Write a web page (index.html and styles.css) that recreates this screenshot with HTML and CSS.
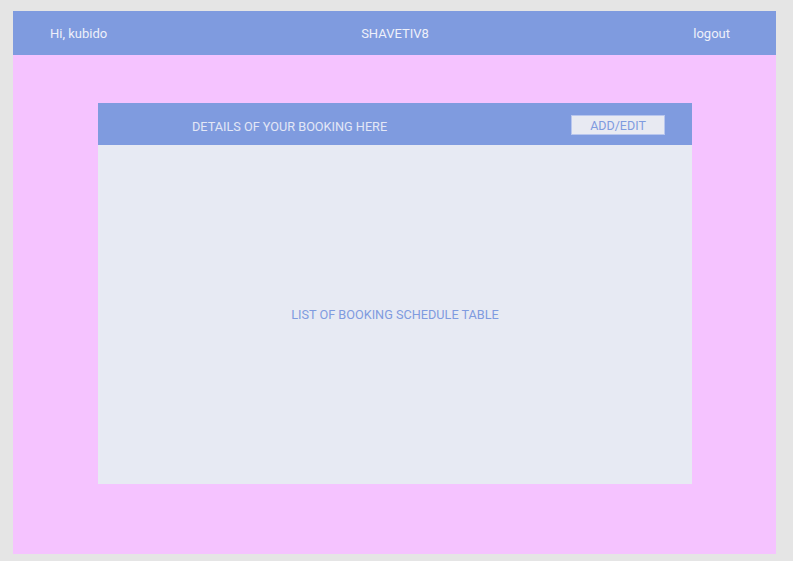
FILE: index.html
```html
<!DOCTYPE html>
<html>
<head>
<meta charset="utf-8">
<link rel="stylesheet" href="styles.css">
</head>
<body>
<div class="frame">
  <header class="topbar">
    <span class="greet">Hi, kubido</span>
    <span class="brand">SHAVETIV8</span>
    <span class="logout">logout</span>
  </header>
  <main class="content">
    <section class="card">
      <div class="card-head">
        <span class="card-title">DETAILS OF YOUR BOOKING HERE</span>
        <button class="btn">ADD/EDIT</button>
      </div>
      <div class="card-body">
        <span class="placeholder">LIST OF BOOKING SCHEDULE TABLE</span>
      </div>
    </section>
  </main>
</div>
</body>
</html>
```
FILE: styles.css
```css
html, body {
  margin: 0;
  padding: 0;
  background: #e5e5e5;
  font-family: Roboto, "Liberation Sans", sans-serif;
}
body {
  padding: 11px 17px 7px 13px;
}
.frame {
  width: 763px;
  height: 543px;
  background: #f5c3ff;
  display: flex;
  flex-direction: column;
}
.topbar {
  height: 44px;
  flex: none;
  background: #7f9bdf;
  color: #eef0fa;
  font-size: 13px;
  display: grid;
  grid-template-columns: 1fr auto 1fr;
  align-items: center;
  padding: 0 37px 0 37px;
}
.greet { justify-self: start; }
.brand { justify-self: center; padding-left: 1px; }
.logout { justify-self: end; margin-right: 9px; }
.content {
  flex: 1;
  padding: 48px 84px 70px 85px;
  display: flex;
}
.card {
  flex: 1;
  display: flex;
  flex-direction: column;
}
.card-head {
  height: 42px;
  flex: none;
  background: #7f9bdf;
  display: flex;
  align-items: center;
  padding: 0 27px 0 94px;
}
.card-title {
  flex: 1;
  color: #e3e7f6;
  font-size: 12.7px;
  padding-top: 5px;
}
.btn {
  width: 94px;
  height: 20px;
  background: #e8eaf2;
  border: 1px solid #b8c6ee;
  color: #7f9bdf;
  font-family: inherit;
  font-size: 12.5px;
  padding: 0;
  margin: 2px 0 0 0;
}
.card-body {
  flex: 1;
  background: #e7eaf3;
  display: flex;
  align-items: center;
  justify-content: center;
}
.placeholder {
  color: #7f9bdf;
  font-size: 12.7px;
}
```
